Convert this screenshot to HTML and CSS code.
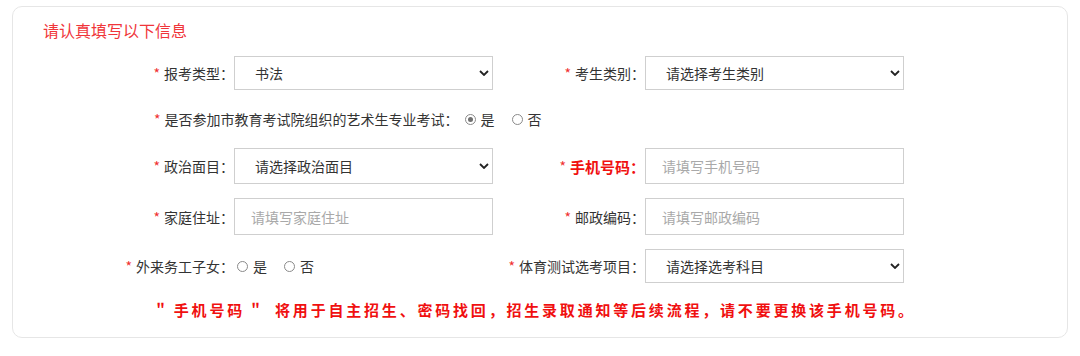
FILE: index.html
```html
<!DOCTYPE html>
<html lang="zh-CN">
<head>
    <meta charset="UTF-8">
    <meta name="viewport" content="width=device-width, initial-scale=1.0">
    <title>报名信息</title>
    <link rel="stylesheet" href="styles.css">
</head>
<body>
    <div class="card">
        <h3 class="title">请认真填写以下信息</h3>

        <form class="form-grid">
            <!-- 第一行 -->
            <label class="lbl"><i class="req">*</i>报考类型：</label>
            <div class="field">
                <select class="ctrl">
                    <option>书法</option>
                </select>
            </div>
            <label class="lbl"><i class="req">*</i>考生类别：</label>
            <div class="field">
                <select class="ctrl">
                    <option>请选择考生类别</option>
                </select>
            </div>

            <!-- 艺术生专业考试 -->
            <div class="row-wide">
                <span class="lbl-inline"><i class="req">*</i>是否参加市教育考试院组织的艺术生专业考试：</span>
                <span class="radios">
                    <label class="radio"><input type="radio" name="art" checked>是</label>
                    <label class="radio"><input type="radio" name="art">否</label>
                </span>
            </div>

            <!-- 政治面目 / 手机号码 -->
            <label class="lbl"><i class="req">*</i>政治面目：</label>
            <div class="field">
                <select class="ctrl">
                    <option>请选择政治面目</option>
                </select>
            </div>
            <label class="lbl lbl-strong"><i class="req">*</i>手机号码：</label>
            <div class="field">
                <input class="ctrl" type="text" placeholder="请填写手机号码">
            </div>

            <!-- 住址 / 邮编 -->
            <label class="lbl"><i class="req">*</i>家庭住址：</label>
            <div class="field">
                <input class="ctrl" type="text" placeholder="请填写家庭住址">
            </div>
            <label class="lbl"><i class="req">*</i>邮政编码：</label>
            <div class="field">
                <input class="ctrl" type="text" placeholder="请填写邮政编码">
            </div>

            <!-- 外来务工 / 体育测试 -->
            <label class="lbl"><i class="req">*</i>外来务工子女：</label>
            <div class="field radios radios-field">
                <label class="radio"><input type="radio" name="migrant">是</label>
                <label class="radio"><input type="radio" name="migrant">否</label>
            </div>
            <label class="lbl"><i class="req">*</i>体育测试选考项目：</label>
            <div class="field">
                <select class="ctrl">
                    <option>请选择选考科目</option>
                </select>
            </div>
        </form>

        <p class="note">"&nbsp;手机号码&nbsp;"&nbsp;&nbsp;将用于自主招生、密码找回，招生录取通知等后续流程，请不要更换该手机号码。</p>
    </div>
</body>
</html>
```

FILE: styles.css
```css
body {
    margin: 0;
    padding: 0;
    background-color: #fff;
    font-family: "Noto Sans CJK SC", "Liberation Sans", sans-serif;
    font-size: 14px;
    color: #333;
}

.card {
    margin: 6px 12px 0 12px;
    height: 332px;
    box-sizing: border-box;
    border: 1px solid #e6e6e6;
    border-radius: 10px;
    padding-top: 13px;
}

.title {
    margin: 0 0 0 30px;
    font-size: 16px;
    font-weight: normal;
    line-height: 20px;
    color: #f0353a;
}

.form-grid {
    display: grid;
    grid-template-columns: 221px 259px 152px 259px;
    grid-template-rows: 34px 30px 36px 37px 34px;
    row-gap: 14px;
    margin-top: 16px;
}

.lbl {
    display: flex;
    align-items: center;
    justify-content: flex-end;
    white-space: nowrap;
    color: #333;
}

.lbl-strong {
    color: #f01010;
    font-weight: bold;
    font-size: 15px;
}

.req {
    font-style: normal;
    color: #f03030;
    margin-right: 4px;
    font-weight: normal;
    font-size: 14px;
}

.field {
    display: flex;
    align-items: stretch;
}

.ctrl {
    width: 100%;
    box-sizing: border-box;
    border: 1px solid #cfcfcf;
    background-color: #fff;
    font-family: inherit;
    font-size: 14px;
    color: #333;
    outline: none;
    margin: 0;
}

input.ctrl {
    padding: 0 0 0 16px;
}

input.ctrl::placeholder {
    color: #a9a9a9;
}

select.ctrl {
    appearance: none;
    -webkit-appearance: none;
    border-radius: 0;
    padding: 0 0 0 20px;
    background-image: url("data:image/svg+xml;utf8,<svg xmlns='http://www.w3.org/2000/svg' width='10' height='6' viewBox='0 0 10 6'><path d='M1 1l4 4 4-4' fill='none' stroke='%23222' stroke-width='1.8'/></svg>");
    background-repeat: no-repeat;
    background-position: right 3px center;
}

.row-wide {
    grid-column: 1 / 5;
    display: flex;
    align-items: center;
    padding-left: 141px;
}

.radios {
    display: flex;
    align-items: center;
    margin-left: 6px;
}

.radios-field {
    margin-left: 3px;
}

.radio {
    display: flex;
    align-items: center;
    margin-right: 17px;
}

.radio input {
    appearance: none;
    -webkit-appearance: none;
    width: 11px;
    height: 11px;
    margin: 0 5px 0 0;
    border: 1px solid #8a8a8a;
    border-radius: 50%;
    box-sizing: border-box;
    position: relative;
}

.radio input:checked::after {
    content: "";
    position: absolute;
    left: 2px;
    top: 2px;
    width: 5px;
    height: 5px;
    border-radius: 50%;
    background: #707070;
}

.note {
    margin: 17px 0 0 0;
    text-align: center;
    color: #f01010;
    font-weight: bold;
    font-size: 15px;
    letter-spacing: 2.8px;
    line-height: 20px;
    padding-right: 8px;
}
```
